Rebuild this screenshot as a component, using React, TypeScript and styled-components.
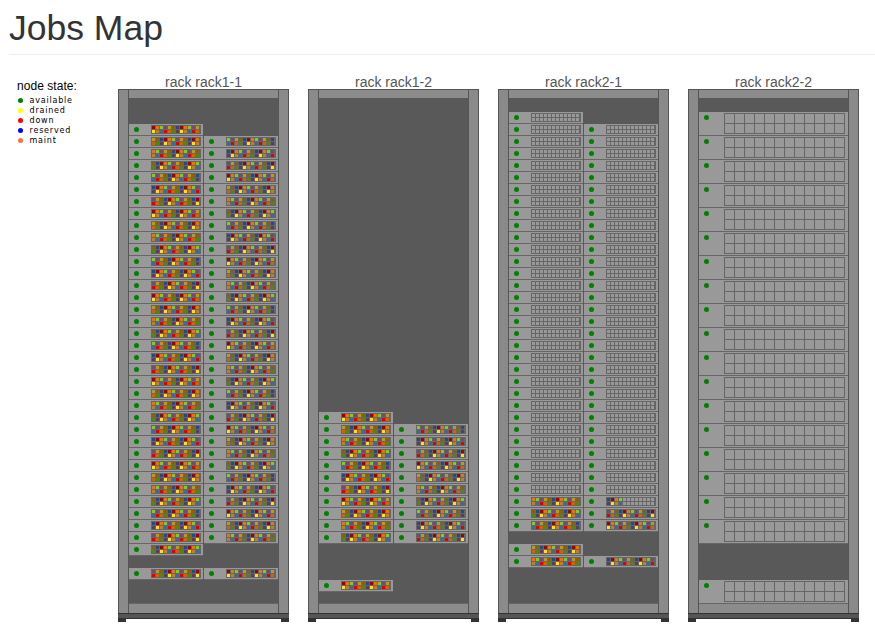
import React from "react";
import styled, { createGlobalStyle } from "styled-components";

const GlobalStyle = createGlobalStyle`
    html, body {
        margin: 0;
        padding: 0;
        background: #fff;
        overflow: hidden;
    }
`;

const Page = styled.div`
    font-family: "Liberation Sans", Arial, sans-serif;
    width: 875px;
    height: 633px;
    overflow: hidden;
`;

const Header = styled.div`
    margin-left: 9px;
    height: 54px;
    border-bottom: 1px solid #eeeeee;
`;

const Title = styled.h1`
    margin: 0;
    padding-top: 8px;
    font-size: 35.5px;
    line-height: 40px;
    font-weight: 400;
    color: #333333;
`;

const Content = styled.div`
    display: flex;
    padding: 20px 0 0 17px;
`;

const Legend = styled.div`
    width: 101px;
    flex: none;
    padding-top: 4px;
`;

const LegendTitle = styled.div`
    font-size: 12px;
    line-height: 14px;
    color: #000;
    margin-bottom: 2px;
    letter-spacing: 0.05px;
`;

const LegendItem = styled.div`
    display: flex;
    align-items: center;
    height: 10px;
    font-family: "DejaVu Sans", sans-serif;
    font-size: 8px;
    letter-spacing: 0.8px;
    color: #000;
`;

const LegendDot = styled.span<{ $color: string }>`
    width: 5px;
    height: 5px;
    border-radius: 50%;
    margin: 0 6.5px 0 1px;
    background: ${props => props.$color};
`;

const Racks = styled.div`
    display: flex;
    gap: 19px;
`;

const RackBox = styled.div`
    width: 171px;
    flex: none;
`;

const RackName = styled.div`
    height: 14px;
    font-size: 14px;
    line-height: 14px;
    text-align: center;
    color: #555555;
`;

const Cabinet = styled.div`
    display: flex;
    border-top: 1px solid #555555;
`;

const Post = styled.div`
    width: 11px;
    flex: none;
    box-sizing: border-box;
    background: #8a8a8a;
    border-left: 1px solid #555555;
    border-right: 1px solid #555555;
`;

const Bay = styled.div`
    width: 149px;
    flex: none;
`;

const Bar = styled.div`
    height: 8px;
    background: #8c8c8c;
`;

const BottomBar = styled.div`
    height: 9px;
    background: #8c8c8c;
    border-top: 1px solid #666666;
`;

const Slots = styled.div`
    height: 505px;
    background: #595959;
    overflow: hidden;
`;

const Spacer = styled.div<{ $height: number }>`
    height: ${props => props.$height}px;
`;

const Row = styled.div`
    display: flex;
    gap: 1px;
    padding-bottom: 1px;
`;

const Node = styled.div<{ $wide?: boolean }>`
    display: flex;
    align-items: flex-start;
    box-sizing: border-box;
    width: ${props => (props.$wide ? 149 : 74)}px;
    height: ${props => (props.$wide ? 23 : 11)}px;
    background: #999999;
    box-shadow: 0 1px 0 #666666;
`;

const Led = styled.span<{ $wide?: boolean }>`
    width: 5px;
    height: 5px;
    flex: none;
    border-radius: 50%;
    background: #008000;
    margin: 3px ${props => (props.$wide ? 15 : 12)}px 0 5px;
`;

const Cores = styled.div<{ $wide?: boolean }>`
    display: grid;
    grid-template-columns: repeat(12, ${props => (props.$wide ? 9 : 3)}px);
    grid-template-rows: repeat(2, ${props => (props.$wide ? 9 : 3)}px);
    gap: 1px;
    margin-top: 1px;
    padding: ${props => (props.$wide ? "1px" : "1px 2px 1px 1px")};
    background: #666666;
`;

const Core = styled.span<{ $color: string }>`
    background: ${props => props.$color};
`;

const Base = styled.div`
    height: 4px;
    background: #555555;
    border-top: 1px solid #333333;
    border-bottom: 1px solid #333333;
`;

const Feet = styled.div`
    display: flex;
    justify-content: space-between;
`;

const Foot = styled.div`
    width: 8px;
    height: 3px;
    background: #333333;
`;

const IDLE = "#999999";
const TOP = ["#a00000", "#ee7400", "#80cc20", "#704a70", "#c09a10", "#8a6000", "#204a88"];
const BOTTOM = ["#ffe010", "#c08020", "#3a6aa0", "#e00000", "#d86000", "#508a00", "#5a3a6a"];

// offset: position in the job colour cycle, undefined: node has no job
// fill: how many columns hold a job
type NodeDef = { offset?: number; fill?: number };
type Slot = { gap: number } | { nodes: NodeDef[] };

const full = (k: number): Slot => ({
    nodes: [{ offset: (4 * k) % 7 }, { offset: ((4 * k) % 7 + 5) % 7 }]
});

const idle = (count: number): Slot[] => Array.from({ length: count }, () => ({ nodes: [{}, {}] }));

const rack11: Slot[] = [
    { gap: 26 },
    { nodes: [{ offset: 0 }] },
    ...Array.from({ length: 34 }, (_, i) => full(i + 1)),
    { nodes: [{ offset: 5 }] },
    { gap: 12 },
    { nodes: [{ offset: 3 }, { offset: 0 }] }
];

const rack12: Slot[] = [
    { gap: 314 },
    { nodes: [{ offset: 0 }] },
    ...Array.from({ length: 10 }, (_, i) => full(i + 1)),
    { gap: 36 },
    { nodes: [{ offset: 0 }] }
];

const rack21: Slot[] = [
    { gap: 14 },
    { nodes: [{}] },
    ...idle(31),
    { nodes: [{ offset: 1 }, { offset: 6, fill: 4 }] },
    { nodes: [{ offset: 5 }, { offset: 3 }] },
    { nodes: [{ offset: 2 }, { offset: 0 }] },
    { gap: 12 },
    { nodes: [{ offset: 4 }] },
    { nodes: [{ offset: 1 }, { offset: 6 }] }
];

const rack22: Slot[] = [
    { gap: 14 },
    ...Array.from({ length: 18 }, () => ({ nodes: [{}] })),
    { gap: 36 },
    { nodes: [{}] }
];

const racks = [
    { name: "rack rack1-1", slots: rack11, wide: false },
    { name: "rack rack1-2", slots: rack12, wide: false },
    { name: "rack rack2-1", slots: rack21, wide: false },
    { name: "rack rack2-2", slots: rack22, wide: true }
];

const legend = [
    { label: "available", color: "#008000" },
    { label: "drained", color: "#ffff00" },
    { label: "down", color: "#ff0000" },
    { label: "reserved", color: "#0000ff" },
    { label: "maint", color: "#ff7040" }
];

const coreColor = (def: NodeDef, row: number, col: number) => {
    if (def.offset === undefined || col >= (def.fill ?? 12)) {
        return IDLE;
    }
    const cycle = row === 0 ? TOP : BOTTOM;
    return cycle[(def.offset + col) % 7];
};

const RackNode = ({ def, wide }: { def: NodeDef; wide: boolean }) => (
    <Node $wide={wide}>
        <Led $wide={wide} />
        <Cores $wide={wide}>
            {[0, 1].map(row =>
                Array.from({ length: 12 }, (_, col) => (
                    <Core key={`${row}-${col}`} $color={coreColor(def, row, col)} />
                ))
            )}
        </Cores>
    </Node>
);

const Rack = ({ name, slots, wide }: { name: string; slots: Slot[]; wide: boolean }) => (
    <RackBox>
        <RackName>{name}</RackName>
        <Cabinet>
            <Post />
            <Bay>
                <Bar />
                <Slots>
                    {slots.map((slot, index) =>
                        "gap" in slot ? (
                            <Spacer key={index} $height={slot.gap} />
                        ) : (
                            <Row key={index}>
                                {slot.nodes.map((def, i) => (
                                    <RackNode key={i} def={def} wide={wide} />
                                ))}
                            </Row>
                        )
                    )}
                </Slots>
                <BottomBar />
            </Bay>
            <Post />
        </Cabinet>
        <Base />
        <Feet>
            <Foot />
            <Foot />
        </Feet>
    </RackBox>
);

export default function App() {
    return (
        <Page>
            <GlobalStyle />
            <Header>
                <Title>Jobs Map</Title>
            </Header>
            <Content>
                <Legend>
                    <LegendTitle>node state:</LegendTitle>
                    {legend.map(item => (
                        <LegendItem key={item.label}>
                            <LegendDot $color={item.color} />
                            {item.label}
                        </LegendItem>
                    ))}
                </Legend>
                <Racks>
                    {racks.map(rack => (
                        <Rack key={rack.name} {...rack} />
                    ))}
                </Racks>
            </Content>
        </Page>
    );
}
